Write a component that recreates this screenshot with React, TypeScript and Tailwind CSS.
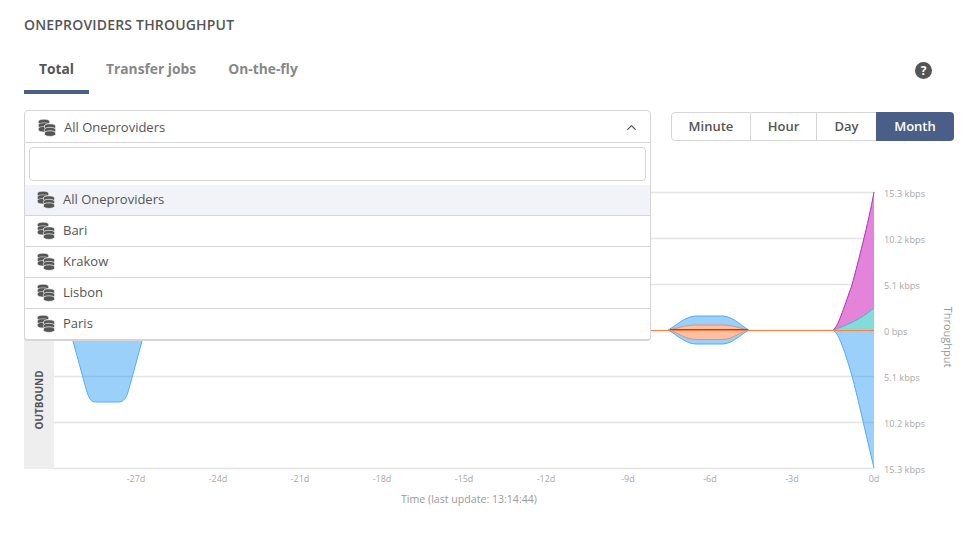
import { ChevronUp } from 'lucide-react'

const providers = ['All Oneproviders', 'Bari', 'Krakow', 'Lisbon', 'Paris']
const gridLines = [192, 238, 284, 330, 376, 422, 468]
const xLabels = ['-27d', '-24d', '-21d', '-18d', '-15d', '-12d', '-9d', '-6d', '-3d', '0d']
const yLabels = ['15.3 kbps', '10.2 kbps', '5.1 kbps', '0 bps', '5.1 kbps', '10.2 kbps', '15.3 kbps']

function ProviderIcon() {
    const disc = (cx: number, y: number) => (
        <path
            key={`${cx}-${y}`}
            d={`M${cx - 5.6} ${y}c0-1.4 2.5-2.2 5.6-2.2s5.6.8 5.6 2.2v1.2c0 1.4-2.5 2.2-5.6 2.2s-5.6-.8-5.6-2.2z`}
        />
    )
    return (
        <svg width="18" height="18" viewBox="0 0 18 18" className="shrink-0 fill-[#555555]">
            <g className="stroke-white stroke-[0.5]">
                {[2.4, 6, 9.6].map(y => disc(6, y))}
            </g>
            <g className="stroke-white stroke-[0.7]">
                {[7, 10.5, 14].map(y => disc(12, y))}
            </g>
        </svg>
    )
}

function HelpIcon() {
    return (
        <div className="flex h-[17px] w-[17px] items-center justify-center rounded-full bg-[#555555] text-[12px] font-bold leading-none text-white">
            ?
        </div>
    )
}

function Chart() {
    return (
        <svg width="977" height="380" viewBox="0 150 977 380" className="block font-['Open_Sans',sans-serif]">
            <rect x="24" y="330" width="30" height="139" fill="#eeeeee" />
            <text
                x="0"
                y="0"
                transform="translate(43 400) rotate(-90)"
                textAnchor="middle"
                fontSize="10"
                fontWeight="700"
                fill="#555555"
            >
                OUTBOUND
            </text>
            {gridLines.map(y => (
                <line key={y} x1="54" x2="874" y1={y + 0.5} y2={y + 0.5} stroke="#e4e4e4" strokeWidth="1.5" />
            ))}

            {/* hump on the left */}
            <path
                d="M70 330C76 352 83 378 87 392C90 401 92 402 96 402L118 402C122 402 125 401 128 392C132 378 139 352 145 330Z"
                fill="#2196f3"
                fillOpacity="0.45"
                stroke="#55acf5"
                strokeWidth="1"
            />

            {/* hump in the middle */}
            <path
                d="M668 330C676 326 684 317 695 316L723 316C734 317 741 326 749 330C741 334 734 343 723 344L695 344C684 343 676 334 668 330Z"
                fill="#2196f3"
                fillOpacity="0.45"
                stroke="#55acf5"
                strokeWidth="1"
            />
            <path
                d="M668 330C676 329 684 325 695 325L723 325C734 325 741 329 749 330C741 331 734 339 723 339.5L695 339.5C684 339 676 331 668 330Z"
                fill="#ffbfa3"
                stroke="#d9967f"
                strokeWidth="1"
            />
            <line x1="670" x2="748" y1="329.5" y2="329.5" stroke="#5a5a6a" strokeWidth="1" />

            {/* stack on the right */}
            <path
                d="M833 330C845 326 860 320 874 308L874 192C868 225 858 262 852 285C843 310 838 327 833 330Z"
                fill="#e484d9"
            />
            <path
                d="M833 330C838 327 843 310 852 285C858 262 868 225 874 192"
                fill="none"
                stroke="#b52bc4"
                strokeWidth="1"
            />
            <path d="M833 330C845 326 860 320 874 308L874 330Z" fill="#84dcd8" />
            <path d="M833 330C845 326 860 320 874 308" fill="none" stroke="#3cb8b8" strokeWidth="1" />
            <path
                d="M833 330C838 333 843 345 852 376C858 398 866 435 874 468L874 330Z"
                fill="#2196f3"
                fillOpacity="0.45"
            />
            <path
                d="M833 330C838 333 843 345 852 376C858 398 866 435 874 468"
                fill="none"
                stroke="#55acf5"
                strokeWidth="1"
            />

            <line x1="54" x2="874" y1="330.5" y2="330.5" stroke="#ff8040" strokeWidth="1" />

            <g opacity="0.95">
                {xLabels.map((label, i) => (
                    <text key={label} x={136 + i * 82} y="482" textAnchor="middle" fontSize="9" fill="#a5a5a5">
                        {label}
                    </text>
                ))}
                {yLabels.map((label, i) => (
                    <text key={i} x="884" y={gridLines[i] + 4.5} fontSize="9.2" fill="#a5a5a5">
                        {label}
                    </text>
                ))}
                <text x="469" y="503" textAnchor="middle" fontSize="10.6" fill="#959595">
                    Time (last update: 13:14:44)
                </text>
                <text
                    x="0"
                    y="0"
                    transform="translate(943.5 337) rotate(90)"
                    textAnchor="middle"
                    fontSize="11"
                    fill="#959595"
                >
                    Throughput
                </text>
            </g>
        </svg>
    )
}

export default function App() {
    return (
        <div className="h-[538px] w-[977px] overflow-hidden bg-white font-['Open_Sans',sans-serif] text-[#555555]">
            <h1 className="pl-6 pt-[15px] text-[14px] font-semibold leading-[19px] tracking-[0.18px]">
                ONEPROVIDERS THROUGHPUT
            </h1>

            {/* Tabs */}
            <div className="mt-[11px] flex h-[65px] items-start justify-between pl-6 pr-[45px]">
                <div className="flex text-[13.8px] font-bold leading-[19px]">
                    <div className="h-[49px] w-[65px] border-b-4 border-[#4a5f87] pl-[15px] pt-[14px]">Total</div>
                    <div className="pl-[17px] pr-4 pt-[14px] text-[#888888]">Transfer jobs</div>
                    <div className="px-4 pt-[14px] text-[#888888]">On-the-fly</div>
                </div>
                <div className="pt-[17px]">
                    <HelpIcon />
                </div>
            </div>

            {/* Controls */}
            <div className="flex items-start justify-between pl-6 pr-[23px]">
                <div className="relative w-[627px]">
                    <div className="flex h-[33px] items-center gap-[8px] rounded-t-[4px] border border-[#d5d5d5] bg-white pl-[13px] pr-[11px] pt-[2px] text-[13px]">
                        <ProviderIcon />
                        <span className="flex-1">All Oneproviders</span>
                        <ChevronUp size={15} strokeWidth={2} />
                    </div>
                    <div className="absolute left-0 right-0 top-[33px] z-10 rounded-b-[4px] border-x border-b-2 border-[#d5d5d5] bg-white">
                        <div className="h-[42px] px-1 pt-[4px]">
                            <div className="h-[34px] rounded-[4px] border border-[#d5d5d5] bg-white" />
                        </div>
                        {providers.map((name, i) => (
                            <div
                                key={name}
                                className={
                                    i === 0
                                        ? 'flex h-[31px] items-center gap-[8px] border-b border-[#d5d5d5] bg-[#f2f3f8] pl-[12px] text-[13px]'
                                        : 'flex h-[31px] items-center gap-[8px] border-b border-[#d5d5d5] pl-[12px] text-[13px] last:h-[30px] last:border-b-0'
                                }
                            >
                                <ProviderIcon />
                                <span>{name}</span>
                            </div>
                        ))}
                    </div>
                </div>
                <div className="mt-[2px] flex h-[29px] w-[283px] text-[13px] font-semibold">
                    <div className="flex w-[80px] items-center justify-center rounded-l-[4px] border border-[#d5d5d5] pt-px">
                        Minute
                    </div>
                    <div className="flex w-[66px] items-center justify-center border-y border-r border-[#d5d5d5] pt-px">
                        Hour
                    </div>
                    <div className="flex w-[59px] items-center justify-center border-y border-[#d5d5d5] pt-px">Day</div>
                    <div className="flex w-[78px] items-center justify-center rounded-r-[4px] bg-[#4a5f87] pt-px text-white">
                        Month
                    </div>
                </div>
            </div>

            <div className="mt-[7px]">
                <Chart />
            </div>
        </div>
    )
}
